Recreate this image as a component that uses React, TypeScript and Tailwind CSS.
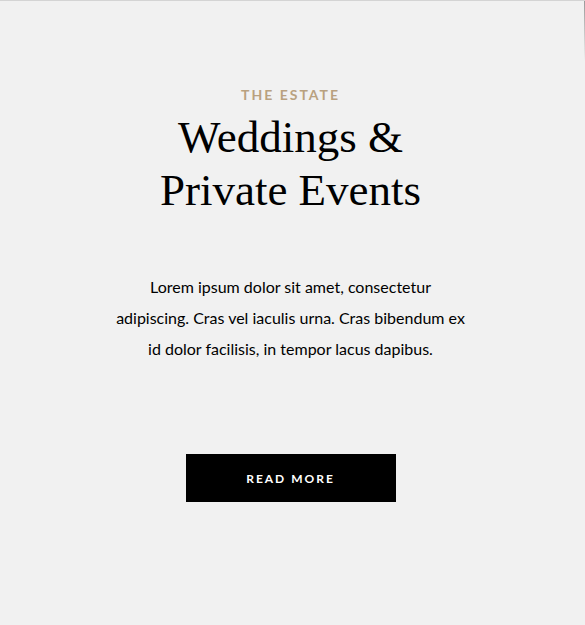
const GOLD = '#b9a17f'

export default function App() {
  return (
    <div className="relative w-[585px] h-[625px] bg-[#f1f1f1] border-t border-[#d4d4d4] overflow-hidden">
      <div className="absolute right-0 top-0 w-px h-[60px] bg-gradient-to-b from-[#9a9a9a] to-transparent" />
      <section className="flex flex-col items-center pt-[85px] pr-[4px]">
        <p
          className="m-0 text-[14px] font-bold leading-[18px] tracking-[2px] uppercase font-['Lato',sans-serif]"
          style={{ color: GOLD }}
        >
          The Estate
        </p>
        <h2 className="m-0 mt-[7px] text-center text-[45px] font-normal leading-[53px] text-black font-['Liberation_Serif',serif]">
          Weddings &amp;
          <br />
          Private Events
        </h2>
        <p className="m-0 mt-[54px] w-[352px] text-center text-[16px] leading-[31px] text-black font-['Lato',sans-serif]">
          Lorem ipsum dolor sit amet, consectetur adipiscing. Cras vel iaculis urna. Cras bibendum ex id dolor facilisis, in tempor lacus dapibus.
        </p>
        <a
          href="#"
          className="mt-[90px] flex items-center justify-center w-[210px] h-[48px] pt-[2px] bg-black text-white text-[12px] font-bold tracking-[2px] uppercase no-underline font-['Lato',sans-serif]"
        >
          Read More
        </a>
      </section>
    </div>
  )
}
